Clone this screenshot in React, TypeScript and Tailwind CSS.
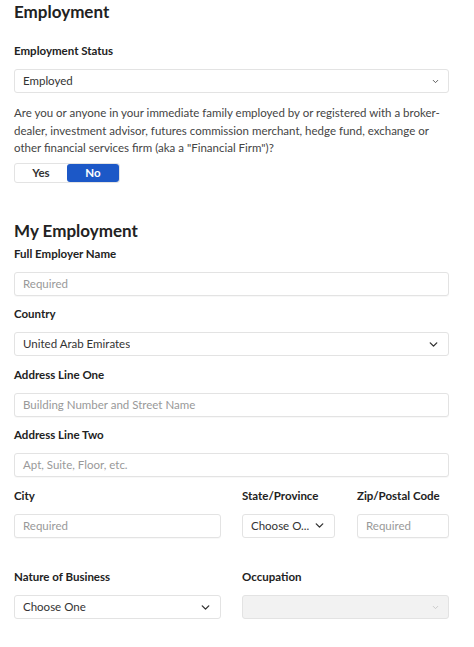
import { ChevronDown } from "lucide-react";

const FONT = { fontFamily: "Lato, 'Open Sans', sans-serif" };

function Label({ children }: { children: React.ReactNode }) {
  return <div className="text-[11.5px] font-bold leading-[16px] text-[#222] mb-[10px]">{children}</div>;
}

function TextInput({ placeholder }: { placeholder: string }) {
  return (
    <div className="h-[24px] w-full rounded-[3px] border border-[#e3e3e3] bg-white px-[8px] flex items-center text-[11.5px] text-[#999] shadow-[0_1px_1px_rgba(0,0,0,0.03)]">
      {placeholder}
    </div>
  );
}

function Select({ value, tiny, disabled }: { value: string; tiny?: boolean; disabled?: boolean }) {
  return (
    <div
      className={`h-[24px] w-full rounded-[3px] border border-[#e3e3e3] flex items-center justify-between pl-[8px] pr-[8px] text-[11.5px] ${
        disabled ? "bg-[#f2f2f2]" : "bg-white"
      } text-[#333]`}
    >
      <span className="truncate">{value}</span>
      {tiny ? (
        <ChevronDown className={`w-[9px] h-[9px] shrink-0 ${disabled ? "text-[#c8c8c8]" : "text-[#555]"}`} strokeWidth={2.5} />
      ) : (
        <ChevronDown className="w-[13px] h-[13px] shrink-0 text-[#333]" strokeWidth={2.5} />
      )}
    </div>
  );
}

export default function App() {
  return (
    <div className="min-h-screen bg-white px-[14px] pr-[25px] text-[#333]" style={FONT}>
      <h1 className="text-[17px] font-bold leading-[24px] text-[#222]">Employment</h1>

      <div className="mt-[19px]">
        <Label>Employment Status</Label>
        <Select value="Employed" tiny />
      </div>

      <p className="mt-[11px] text-[11.5px] leading-[17.5px] text-[#444]">
        Are you or anyone in your immediate family employed by or registered with a broker-dealer, investment
        advisor, futures commission merchant, hedge fund, exchange or other financial services firm (aka a
        "Financial Firm")?
      </p>

      <div className="mt-[6px] flex h-[20px] w-[106px] rounded-[3px] border border-[#e3e3e3] text-[11.5px] font-bold">
        <button className="flex-1 text-[#333]">Yes</button>
        <button className="flex-1 rounded-[3px] bg-[#1c58c7] text-white">No</button>
      </div>

      <h2 className="mt-[36px] text-[17px] font-bold leading-[24px] text-[#222]">My Employment</h2>

      <div className="mt-[3px] flex flex-col gap-[10.5px]">
        <div>
          <Label>Full Employer Name</Label>
          <TextInput placeholder="Required" />
        </div>
        <div>
          <Label>Country</Label>
          <Select value="United Arab Emirates" />
        </div>
        <div>
          <Label>Address Line One</Label>
          <TextInput placeholder="Building Number and Street Name" />
        </div>
        <div>
          <Label>Address Line Two</Label>
          <TextInput placeholder="Apt, Suite, Floor, etc." />
        </div>
        <div className="flex">
          <div className="w-[207px]">
            <Label>City</Label>
            <TextInput placeholder="Required" />
          </div>
          <div className="ml-[21px] w-[93px]">
            <Label>State/Province</Label>
            <Select value="Choose O..." />
          </div>
          <div className="ml-[22px] w-[92px]">
            <Label>Zip/Postal Code</Label>
            <TextInput placeholder="Required" />
          </div>
        </div>
        <div className="mt-[21px] flex">
          <div className="w-[207px]">
            <Label>Nature of Business</Label>
            <Select value="Choose One" />
          </div>
          <div className="ml-[21px] flex-1">
            <Label>Occupation</Label>
            <Select value="" tiny disabled />
          </div>
        </div>
      </div>
    </div>
  );
}
